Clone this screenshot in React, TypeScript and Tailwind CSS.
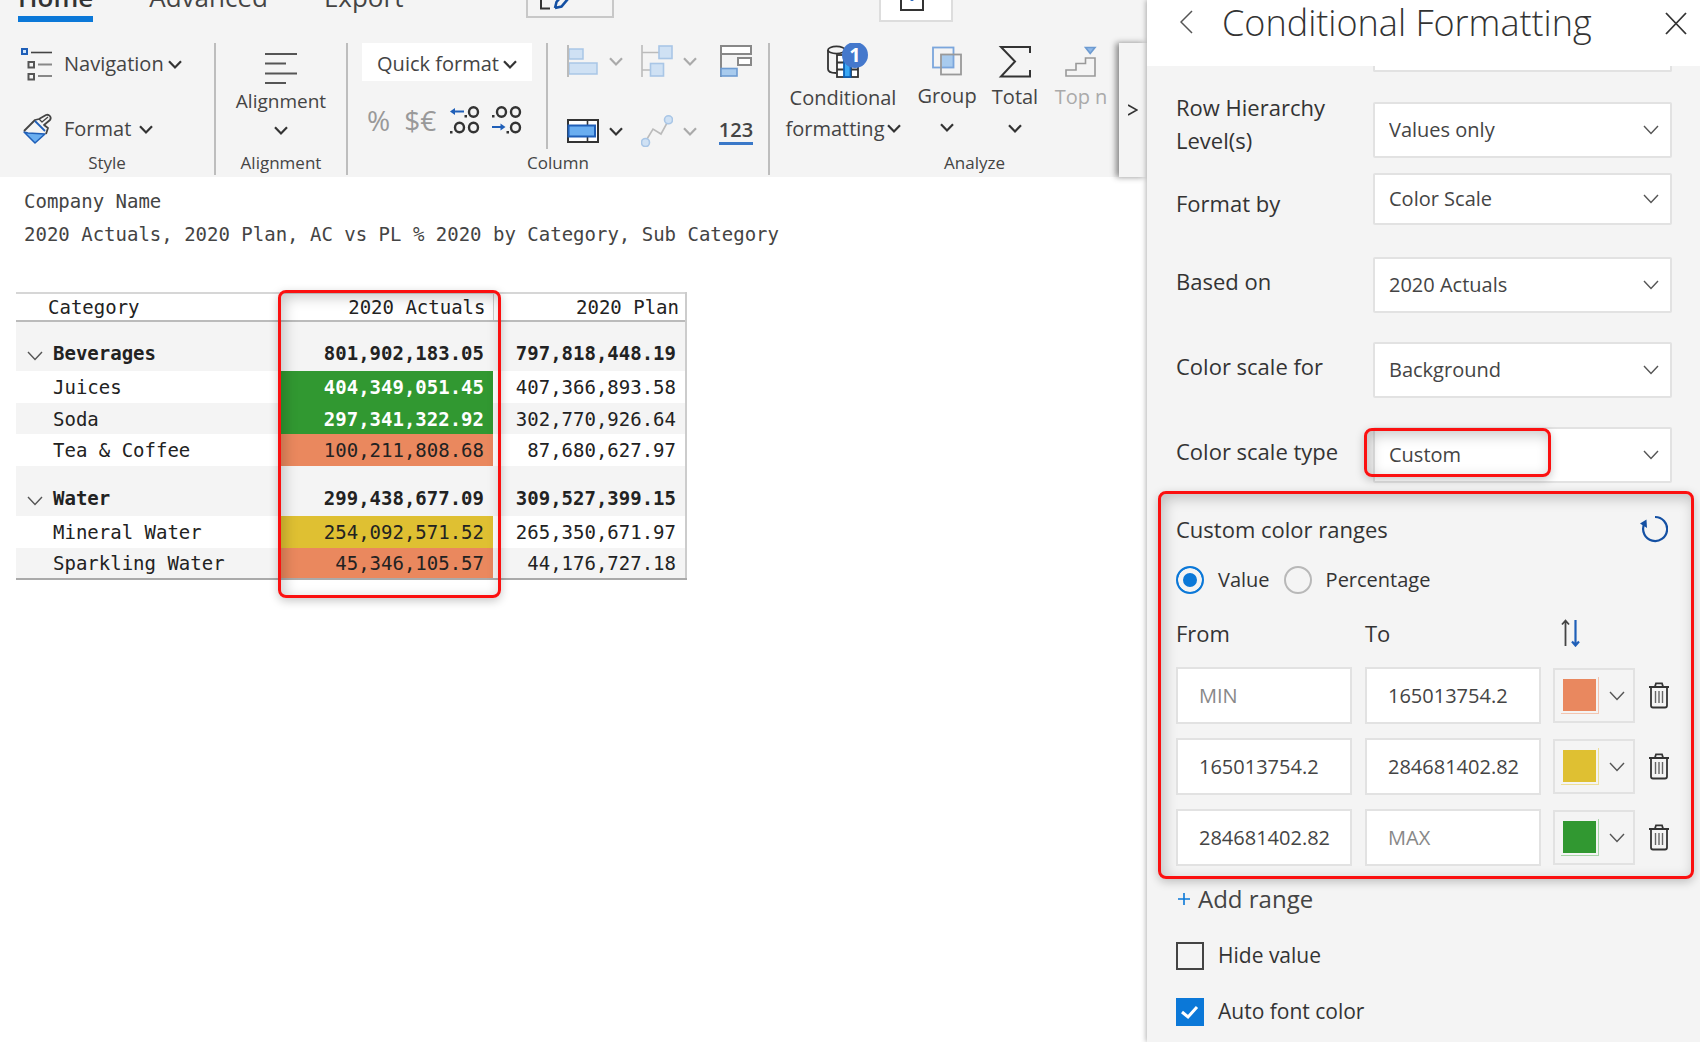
import React, { useState } from "react";

type IconProps = { className?: string };

function Chevron({ className = "text-[#333]" }: IconProps) {
  return (
    <svg className={"shrink-0 " + className} width="14" height="9" viewBox="0 0 14 9" fill="none" stroke="currentColor" strokeWidth="2.2">
      <path d="M1 1.2 7 7.4 13 1.2" />
    </svg>
  );
}

function ThinChevron({ className = "" }: IconProps) {
  return (
    <svg className={"shrink-0 " + className} width="16" height="10" viewBox="0 0 16 10" fill="none" stroke="#555" strokeWidth="1.4">
      <path d="M1 1 8 8.5 15 1" />
    </svg>
  );
}

function NavigationIcon() {
  return (
    <svg width="34" height="34" viewBox="0 0 34 34" fill="none">
      <rect x="2" y="2" width="5" height="5" stroke="#1f5fb8" strokeWidth="2" fill="#cfe4fa" />
      <path d="M11 5.5H32" stroke="#444" strokeWidth="1.6" />
      <path d="M18 17.5H32M18 29H32" stroke="#888" strokeWidth="1.8" />
      <path d="M8.500 15h5.500v5.500H8.500zM8.500 27h5.500v5.500H8.500z" stroke="#555" strokeWidth="2" />
    </svg>
  );
}

function PaintIcon() {
  return (
    <svg width="32" height="32" viewBox="0 0 32 32" fill="none" strokeLinejoin="round">
      <path d="M2 19 6 20 23 21 13 30z" fill="#6aaef0" stroke="#1f5fb8" strokeWidth="1.500" />
      <path d="M2 18 13 7 17 6 24 2 C27 1 30 4 28 7 L22 12 26 15 24 21" stroke="#444" strokeWidth="1.8" />
      <path d="M13 8 23 18" stroke="#1f5fb8" strokeWidth="1.8" />
      <path d="M17 6 20 9 26 4" stroke="#444" strokeWidth="1.300" />
    </svg>
  );
}

function AlignIcon() {
  return (
    <svg width="32" height="34" viewBox="0 0 32 34" stroke="#555" strokeWidth="1.8">
      <path d="M0 3H32M0 12.500H21M0 22.500H32M0 32H21" />
    </svg>
  );
}

function DecimalLess() {
  return (
    <svg width="30" height="28" viewBox="0 0 30 28" fill="none">
      <path d="M4 5.500H14" stroke="#1f5fb8" strokeWidth="2" />
      <path d="M0 5.500 5 2V9z" fill="#1f5fb8" />
      <g stroke="#333" strokeWidth="2.400">
        <ellipse cx="23.500" cy="6" rx="4.500" ry="4.800" />
        <ellipse cx="9.500" cy="21.500" rx="4.500" ry="4.800" />
        <ellipse cx="23.500" cy="21.500" rx="4.500" ry="4.800" />
      </g>
      <path d="M14.500 9h2.500v2.500h-2.500zM0 25h2.500v2.500H0z" fill="#333" />
    </svg>
  );
}

function DecimalMore() {
  return (
    <svg width="30" height="28" viewBox="0 0 30 28" fill="none">
      <path d="M0 21H9" stroke="#1f5fb8" strokeWidth="2" />
      <path d="M13.500 21 8.500 17.500V24.500z" fill="#1f5fb8" />
      <g stroke="#333" strokeWidth="2.400">
        <ellipse cx="9.500" cy="6" rx="4.500" ry="4.800" />
        <ellipse cx="23.500" cy="6" rx="4.500" ry="4.800" />
        <ellipse cx="23.500" cy="21.500" rx="4.500" ry="4.800" />
      </g>
      <path d="M0 9h2.500v2.500H0zM14.500 25h2.500v2.500h-2.500z" fill="#333" />
    </svg>
  );
}

function BarsIcon() {
  return (
    <svg width="32" height="32" viewBox="0 0 32 32" fill="#cfe1f4" stroke="#a9c6e6" strokeWidth="1.500">
      <rect x="2" y="4" width="14" height="10" />
      <rect x="2" y="18" width="28" height="11" />
      <path d="M1 0V32" stroke="#bbb" strokeWidth="2" />
    </svg>
  );
}

function TreeIcon() {
  return (
    <svg width="32" height="32" viewBox="0 0 32 32" fill="#cfe1f4" stroke="#a9c6e6" strokeWidth="1.600">
      <path d="M1 0V32M1 7.500H18M1 25H10" stroke="#bbb" />
      <rect x="18" y="1" width="13" height="12.500" />
      <rect x="9.500" y="18.500" width="13" height="12.500" />
    </svg>
  );
}

function LayoutIcon() {
  return (
    <svg width="34" height="34" viewBox="0 0 34 34" fill="#fff" stroke="#888" strokeWidth="2">
      <rect x="2" y="2" width="30" height="8" />
      <rect x="19" y="14" width="13" height="7" />
      <path d="M2 1V33" />
      <rect x="2" y="24.500" width="16" height="7.500" fill="#a8cbee" stroke="#6d9bd1" strokeWidth="1.600" />
    </svg>
  );
}

function ColumnIcon() {
  return (
    <svg width="32" height="24" viewBox="0 0 32 24" fill="none">
      <rect x="1" y="1" width="30" height="22" fill="#fff" stroke="#333" strokeWidth="2" />
      <path d="M20.500 1V23" stroke="#333" strokeWidth="1.600" />
      <rect x="1.500" y="6.500" width="26.500" height="11" fill="#6aaef0" stroke="#1f5fb8" strokeWidth="2" />
    </svg>
  );
}

function LineIcon() {
  return (
    <svg width="32" height="32" viewBox="0 0 32 32" fill="#cfe1f4" stroke="#a9c6e6" strokeWidth="1.600">
      <path d="M6 24 12 14 20 19 26 8" fill="none" stroke="#bbb" />
      <circle cx="4.500" cy="27.500" r="4" />
      <circle cx="27.500" cy="4.800" r="4" />
    </svg>
  );
}

function DatabaseIcon() {
  return (
    <svg width="32" height="34" viewBox="0 0 32 34" fill="none" stroke="#333" strokeWidth="1.800">
      <path d="M1 5V24C1 26.500 4 28 9 28" />
      <ellipse cx="9.500" cy="5" rx="8.500" ry="3.600" />
      <rect x="10" y="10" width="21" height="22" fill="#fff" />
      <path d="M10 17.500H31M10 24.500H31M24 10V32" />
      <rect x="17" y="10" width="6.500" height="22" fill="#3aa8f5" stroke="#0d5fb5" />
    </svg>
  );
}

function GroupIcon() {
  return (
    <svg width="30" height="30" viewBox="0 0 30 30" fill="none" strokeWidth="1.800">
      <rect x="9" y="9" width="12" height="12" fill="#a8cbee" />
      <rect x="1" y="1.500" width="20.500" height="20" stroke="#7ba6dc" />
      <rect x="9" y="8.500" width="20" height="20" stroke="#999" />
    </svg>
  );
}

function SigmaIcon() {
  return (
    <svg width="34" height="32" viewBox="0 0 34 32" fill="none" stroke="#333" strokeWidth="2">
      <path d="M32 7V1H3L17 15.500 3 30.500H32V24" />
    </svg>
  );
}

function StepsIcon() {
  return (
    <svg width="32" height="32" viewBox="0 0 32 32" fill="none" stroke="#999" strokeWidth="1.600">
      <path d="M1 30V24H11V17.500H20.500V12H30V30z" />
      <path d="M20.500 1.500H30L25.200 7.500z" fill="#8fb8e8" stroke="#6d9bd1" />
    </svg>
  );
}

function ResetIcon() {
  return (
    <svg width="28" height="30" viewBox="0 0 28 30" fill="none">
      <path d="M15 3A12 12 0 1 1 4 10.500" stroke="#1450a3" strokeWidth="2.200" />
      <path d="M0 9.500 6.500 5.500 7 14z" fill="#1450a3" />
    </svg>
  );
}

function SortIcon() {
  return (
    <svg width="20" height="28" viewBox="0 0 20 28" fill="none">
      <path d="M4.500 27V2M1 5.500 4.500 1.500 8 5.500" stroke="#444" strokeWidth="1.800" />
      <path d="M14.500 1V26M11 22.500 14.500 26.500 18 22.500" stroke="#1f5fb8" strokeWidth="2.200" />
    </svg>
  );
}

function TrashIcon() {
  return (
    <svg width="20" height="27" viewBox="0 0 20 27" fill="none" stroke="#333" strokeWidth="1.800">
      <path d="M0 5H20M6 4.500 7 1.300H13L14 4.500" />
      <path d="M2 5V23.500Q2 25.500 4 25.500H16Q18 25.500 18 23.500V5" />
      <path d="M6.500 9V21M10 9V21M13.500 9V21" stroke="#666" strokeWidth="1.400" />
    </svg>
  );
}

function Highlight({ className }: { className: string }) {
  return (
    <div
      aria-hidden="true"
      className={
        "pointer-events-none absolute rounded-lg border-3 border-[#fb1010] shadow-[0_3px_10px_rgba(0,0,0,0.22),inset_3px_4px_14px_rgba(0,0,0,0.22)] " +
        className
      }
    />
  );
}

function GroupLabel({ children }: { children: React.ReactNode }) {
  return <div className="text-center text-[17px] leading-6">{children}</div>;
}

const tools = "flex cursor-pointer flex-col items-center";

function Ribbon() {
  return (
    <div className="bg-[#f4f4f4] text-[#444]">
      <div className="flex h-[22px] items-end overflow-hidden text-[26px] leading-8">
        <nav className="flex w-[526px] shrink-0 items-end gap-[56px] pl-[18px]">
          <button className="border-b-6 border-[#0b78d8] pb-[3px] font-semibold text-[#333]">Home</button>
          <button className="border-b-6 border-transparent pb-[3px]">Advanced</button>
          <button className="border-b-6 border-transparent pb-[3px]">Export</button>
        </nav>
        <button aria-label="Edit" className="mb-1 flex h-10 w-[88px] shrink-0 items-end border-2 border-[#c8c8c8] pb-[6px] pl-[11px]">
          <svg width="34" height="30" viewBox="0 0 34 30" fill="none">
            <path d="M11 28.500H2V2H22" stroke="#333" strokeWidth="2" />
            <path d="M16 28 17.500 22 33 4M16 28 22.500 26.500 34 13" stroke="#1450a3" strokeWidth="2.600" />
          </svg>
        </button>
        <div className="w-[265px]" />
        <button aria-label="Save" className="flex h-10 w-[74px] shrink-0 items-end justify-center border-2 border-[#ddd] bg-white pr-[9px] pb-[9px]">
          <svg width="24" height="26" viewBox="0 0 24 26" fill="none">
            <rect x="1" y="1" width="22" height="24" stroke="#333" strokeWidth="2" />
            <circle cx="12" cy="14" r="2" fill="#1f5fb8" />
          </svg>
        </button>
      </div>

      <div className="flex h-[155px] pt-[21px] text-xl leading-7">
        <section className="mb-[2px] flex w-[216px] shrink-0 flex-col border-r-2 border-[#bdbdbd]">
          <button className="flex h-[42px] items-center gap-[10px] pl-[20px] text-left">
            <NavigationIcon />
            <span className="flex items-center gap-1">Navigation<Chevron /></span>
          </button>
          <button className="mt-[22px] flex h-[44px] items-center gap-[10px] pl-[22px] text-left">
            <PaintIcon />
            <span className="flex items-center gap-[8px]">Format<Chevron /></span>
          </button>
          <GroupLabel>Style</GroupLabel>
        </section>

        <section className="mb-[2px] flex w-[132px] shrink-0 flex-col border-r-2 border-[#bdbdbd]">
          <button className={tools + " h-[108px] pt-2"}>
            <AlignIcon />
            <span className="mt-[2px] text-[19px]">Alignment</span>
            <Chevron className="mt-[11px] text-[#333]" />
          </button>
          <GroupLabel>Alignment</GroupLabel>
        </section>

        <section className="mb-[2px] flex w-[422px] shrink-0 flex-col border-r-2 border-[#bdbdbd]">
          <div className="flex h-[106px]">
            <div className="flex w-[200px] flex-col border-r-2 border-[#bdbdbd] pl-[14px]">
              <button className="flex h-[38px] w-[170px] items-center justify-center gap-1 bg-white pt-1">
                Quick format<Chevron />
              </button>
              <div className="mt-[22px] flex h-[34px] items-center pl-[5px] text-[28px] text-[#999]">
                <button>%</button>
                <button className="ml-[14px]">$€</button>
                <button aria-label="Decrease decimals" className="ml-[14px]"><DecimalLess /></button>
                <button aria-label="Increase decimals" className="ml-3"><DecimalMore /></button>
              </div>
            </div>
            <div className="grid flex-1 grid-cols-[74px_78px_34px] content-between pl-[19px]">
              <button aria-label="Bar chart" className="flex h-[36px] items-center gap-[10px]"><BarsIcon /><Chevron className="text-[#aaa]" /></button>
              <button aria-label="Hierarchy" className="flex h-[36px] items-center gap-[10px]"><TreeIcon /><Chevron className="text-[#aaa]" /></button>
              <button aria-label="Layout" className="flex h-[36px] items-center"><LayoutIcon /></button>
              <button aria-label="Column width" className="flex h-[36px] items-center gap-[10px]"><ColumnIcon /><Chevron /></button>
              <button aria-label="Trend line" className="flex h-[36px] items-center gap-[10px]"><LineIcon /><Chevron className="text-[#aaa]" /></button>
              <button className="mt-1 flex h-[28px] items-center justify-center border-b-3 border-[#3a78c8] text-xl font-semibold">123</button>
            </div>
          </div>
          <div className="mt-[2px]"><GroupLabel>Column</GroupLabel></div>
        </section>

        <section className="flex min-w-0 flex-1 flex-col overflow-hidden">
          <div className="flex h-[108px] shrink-0 gap-4 pl-[14px]">
            <button className="relative flex w-[118px] shrink-0 flex-col items-center pt-[2px]">
              <span className="relative">
                <DatabaseIcon />
                <span className="absolute -top-[3px] left-[15px] flex size-[26px] items-center justify-center rounded-full bg-[#4478cc] text-xl font-bold text-white">1</span>
              </span>
              <span className="mt-[3px] leading-[31px]">Conditional</span>
              <span className="flex items-center gap-[2px] leading-[31px]">formatting<Chevron /></span>
            </button>
            <button className={tools + " w-[58px] shrink-0 pt-[3px]"}>
              <GroupIcon />
              <span className="mt-[6px]">Group</span>
              <Chevron className="mt-[13px] text-[#333]" />
            </button>
            <button className={tools + " w-[46px] shrink-0 pt-[3px]"}>
              <SigmaIcon />
              <span className="mt-[5px]">Total</span>
              <Chevron className="mt-[13px] text-[#333]" />
            </button>
            <button className={tools + " w-[54px] shrink-0 pt-[3px] whitespace-nowrap text-[#aaa]"}>
              <StepsIcon />
              <span className="mt-[5px]">Top n</span>
            </button>
          </div>
          <div className="pl-[60px]"><GroupLabel>Analyze</GroupLabel></div>
        </section>
        <button aria-label="More tools" className="flex w-[28px] shrink-0 items-center justify-center bg-[#f4f4f4] shadow-[-3px_0_6px_rgba(0,0,0,0.45)]">
          <svg width="10" height="12" viewBox="0 0 10 12" fill="none" stroke="#333" strokeWidth="1.600"><path d="M0 1 9 6 0 11" /></svg>
        </button>
      </div>
    </div>
  );
}

type Row = { name: string; actual: string; plan: string; total?: boolean; shade?: boolean; h: string; fill?: string };

const GREEN = "bg-[#319831] font-bold text-white";
const ORANGE = "bg-[#ea885e]";
const YELLOW = "bg-[#dfc032]";

const rows: Row[] = [
  { name: "Beverages", actual: "801,902,183.05", plan: "797,818,448.19", total: true, shade: true, h: "h-[50px]" },
  { name: "Juices", actual: "404,349,051.45", plan: "407,366,893.58", h: "h-[32px]", fill: GREEN },
  { name: "Soda", actual: "297,341,322.92", plan: "302,770,926.64", shade: true, h: "h-[31px]", fill: GREEN },
  { name: "Tea & Coffee", actual: "100,211,808.68", plan: "87,680,627.97", h: "h-[32px]", fill: ORANGE },
  { name: "Water", actual: "299,438,677.09", plan: "309,527,399.15", total: true, shade: true, h: "h-[50px]" },
  { name: "Mineral Water", actual: "254,092,571.52", plan: "265,350,671.97", h: "h-[32px]", fill: YELLOW },
  { name: "Sparkling Water", actual: "45,346,105.57", plan: "44,176,727.18", shade: true, h: "h-[31px]", fill: ORANGE },
];

function Report() {
  return (
    <div className="pt-2 pl-4 font-['DejaVu_Sans_Mono',monospace] text-[19px] leading-[26px] text-[#222]">
      <div className="pl-2 leading-[33px] text-[#444]">
        <p>Company Name</p>
        <p>2020 Actuals, 2020 Plan, AC vs PL % 2020 by Category, Sub Category</p>
      </div>
      <div className="relative mt-[41px] w-[671px]">
        <table className="w-full table-fixed border-collapse">
          <colgroup>
            <col className="w-[265px]" />
            <col className="w-[212px]" />
            <col />
          </colgroup>
          <thead>
            <tr className="h-[28px] border-t-2 border-b-2 border-t-[#d6d6d6] border-b-[#bbb]">
              <th className="p-0 pl-8 text-left leading-6 font-normal">Category</th>
              <th className="border-r border-[#ccc] p-0 pr-[7px] text-right leading-6 font-normal">2020 Actuals</th>
              <th className="border-r-2 border-[#ccc] p-0 pr-[6px] text-right leading-6 font-normal">2020 Plan</th>
            </tr>
          </thead>
          <tbody className="border-r-2 border-b-2 border-r-[#ccc] border-b-[#aaa]">
            {rows.map((r) => (
              <tr key={r.name} className={r.h + (r.shade ? " bg-[#f4f4f4]" : "") + (r.total ? " align-bottom font-bold" : "")}>
                <td className={r.total ? "p-0 pb-[5px]" : "p-0 pl-[37px]"}>
                  {r.total ? (
                    <button className="flex items-center gap-[10px] pl-[11px]" aria-label={"Collapse " + r.name}>
                      <ThinChevron className="mt-[6px]" />
                      {r.name}
                    </button>
                  ) : (
                    r.name
                  )}
                </td>
                <td className={"p-0 pr-[9px] text-right " + (r.total ? "pb-[5px] " : "") + (r.fill ?? "")}>{r.actual}</td>
                <td className={"p-0 pr-[9px] text-right" + (r.total ? " pb-[5px]" : "")}>{r.plan}</td>
              </tr>
            ))}
          </tbody>
        </table>
        <Highlight className="-top-[2px] -bottom-[18px] left-[262px] w-[223px]" />
      </div>
    </div>
  );
}

type FieldProps = { id: string; label: string; value: string; className: string; height?: string; shift?: string; children?: React.ReactNode };

function Field({ id, label, value, className, height = "h-[56px]", shift = "pb-2", children }: FieldProps) {
  return (
    <div className={"flex items-center " + className}>
      <label htmlFor={id} className={"w-[197px] shrink-0 pr-3 text-[22px] leading-[33px] font-medium text-[#333] " + shift}>{label}</label>
      <div className="relative min-w-0 flex-1">
        <select id={id} defaultValue={value} className={"block w-full appearance-none rounded-xs border-2 border-[#e2e2e2] bg-white px-[14px] text-xl text-[#444] " + height}>
          <option>{value}</option>
        </select>
        <ThinChevron className="pointer-events-none absolute top-1/2 right-[13px] -translate-y-1/2" />
        {children}
      </div>
    </div>
  );
}

const ranges = [
  { from: "", to: "165013754.2", color: "bg-[#e9885f]", ring: "border-[#f3c5b0]" },
  { from: "165013754.2", to: "284681402.82", color: "bg-[#dfc032]", ring: "border-[#eedf98]" },
  { from: "284681402.82", to: "", color: "bg-[#319831]", ring: "border-[#a9d4a9]" },
];

const box = "h-[57px] w-[176px] border-2 border-[#e2e2e2] bg-white pl-[21px] text-xl text-[#444] placeholder:text-[#888]";

function FormattingPanel() {
  const [mode, setMode] = useState("value");
  return (
    <aside className="relative flex w-[553px] shrink-0 flex-col bg-[#f4f4f4] text-[#333] shadow-[-1px_0_5px_rgba(0,0,0,0.3)]">
      <header className="flex h-[66px] items-start bg-white">
        <button aria-label="Back" className="mt-[10px] ml-[33px]">
          <svg width="13" height="24" viewBox="0 0 13 24" fill="none" stroke="#555" strokeWidth="1.500"><path d="M12 1 1 12 12 23" /></svg>
        </button>
        <h1 className="ml-[29px] text-[36px] leading-[46px] font-light text-[#333]">Conditional Formatting</h1>
        <button aria-label="Close" className="mt-3 mr-[13px] ml-auto">
          <svg width="22" height="23" viewBox="0 0 22 23" fill="none" stroke="#333" strokeWidth="1.800"><path d="M1 1 21 22M21 1 1 22" /></svg>
        </button>
      </header>
      <div className="pr-[28px] pl-[29px]">
        <div className="ml-[197px] h-[6px] rounded-b-xs border-2 border-t-0 border-[#e2e2e2] bg-white" />
        <Field id="level" label="Row Hierarchy Level(s)" value="Values only" className="mt-[19px]" shift="pb-3" />
        <Field id="by" label="Format by" value="Color Scale" className="mt-[4px]" height="h-[52px]" shift="pt-2" />
        <Field id="based" label="Based on" value="2020 Actuals" className="mt-[32px]" />
        <Field id="for" label="Color scale for" value="Background" className="mt-[29px]" />
        <Field id="type" label="Color scale type" value="Custom" className="mt-[29px]">
          <Highlight className="top-[1px] -left-[9px] h-[49px] w-[187px]" />
        </Field>
      </div>

      <section className="relative mt-[8px] mr-[6px] ml-[11px] h-[388px] px-[18px] pt-[22px]">
        <div className="flex items-center justify-between pr-[8px]">
          <h2 className="text-[22px] leading-8 font-medium">Custom color ranges</h2>
          <button aria-label="Reset ranges"><ResetIcon /></button>
        </div>
        <div className="mt-[19px] flex h-8 items-center text-xl font-medium">
          {["Value", "Percentage"].map((name) => (
            <label key={name} className="mr-[14px] flex items-center gap-[14px]">
              <input
                type="radio"
                name="mode"
                checked={mode === name.toLowerCase()}
                onChange={() => setMode(name.toLowerCase())}
                className="size-[28px] appearance-none rounded-full border-2 border-[#b8b8b8] checked:border-[#0b78d8] checked:bg-[#0b78d8] checked:shadow-[inset_0_0_0_5px_#f4f4f4]"
              />
              {name}
            </label>
          ))}
        </div>
        <div className="mt-[21px] flex h-8 items-center text-[22px]">
          <span className="w-[189px]">From</span>
          <span className="w-[196px]">To</span>
          <button aria-label="Sort ranges"><SortIcon /></button>
        </div>
        <div className="mt-[18px] flex flex-col gap-[14px]">
          {ranges.map((r, i) => (
            <div key={i} className="flex items-center">
              <input aria-label={"From " + (i + 1)} className={box} defaultValue={r.from} placeholder="MIN" />
              <input aria-label={"To " + (i + 1)} className={box + " ml-[13px]"} defaultValue={r.to} placeholder="MAX" />
              <button aria-label="Pick color" className="ml-[12px] flex h-[55px] w-[82px] items-center gap-[10px] border-2 border-[#e2e2e2] pl-[6px]">
                <span className={"border-r border-b p-[2px] " + r.ring}>
                  <span className={"block h-[32px] w-[33px] " + r.color} />
                </span>
                <ThinChevron />
              </button>
              <button aria-label="Delete range" className="ml-[14px]"><TrashIcon /></button>
            </div>
          ))}
        </div>
        <Highlight className="inset-0" />
      </section>

      <button className="mt-[4px] ml-[31px] flex items-center gap-[8px] text-[24px] leading-8 text-[#444]">
        <svg width="12" height="12" viewBox="0 0 12 12" stroke="#0b78d8" strokeWidth="1.600"><path d="M0 6H12M6 0V12" /></svg>
        Add range
      </button>
      {["Hide value", "Auto font color"].map((name, i) => (
        <label key={name} className="mt-[26px] ml-[29px] flex h-[30px] items-center gap-[14px] text-[21px] font-medium">
          <span className="relative flex">
            <input type="checkbox" defaultChecked={i === 1} className="peer size-[28px] appearance-none border-2 border-[#444] checked:border-[#0b78d8] checked:bg-[#0b78d8]" />
            <svg className="pointer-events-none absolute inset-0 hidden peer-checked:block" width="28" height="28" viewBox="0 0 28 28" fill="none" stroke="#fff" strokeWidth="3"><path d="M6 14 12 19 21 9" /></svg>
          </span>
          {name}
        </label>
      ))}
    </aside>
  );
}

export default function App() {
  return (
    <div className="flex h-screen overflow-hidden bg-white font-['Open_Sans',sans-serif]">
      <main className="min-w-0 flex-1">
        <Ribbon />
        <Report />
      </main>
      <FormattingPanel />
    </div>
  );
}
